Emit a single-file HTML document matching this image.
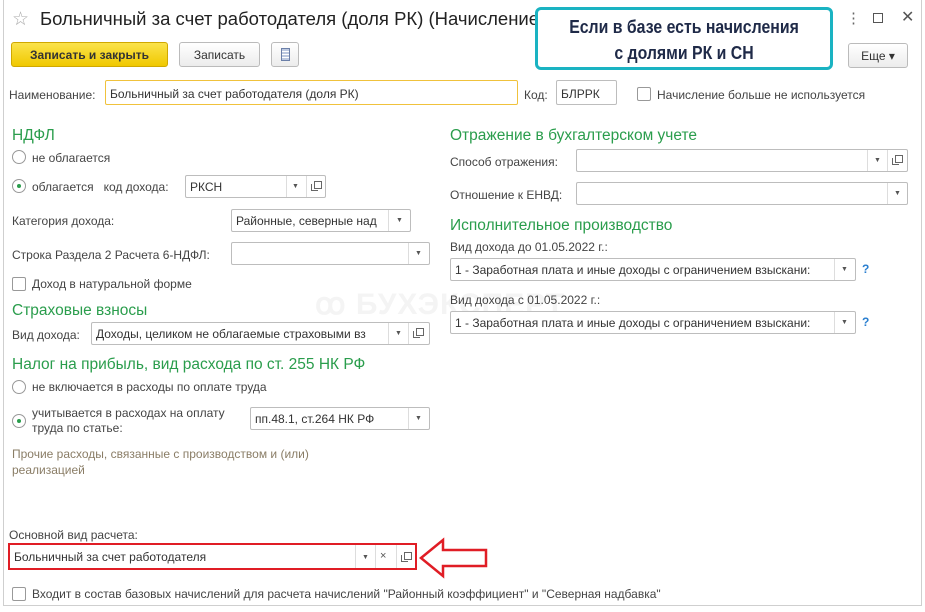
<!DOCTYPE html><html><head><meta charset="utf-8"><style>
*{box-sizing:border-box}
body{margin:0;width:925px;height:612px;background:#fff;font-family:"Liberation Sans",sans-serif;font-size:12px;color:#444;position:relative;overflow:hidden}
.a{position:absolute;white-space:nowrap}
.win{position:absolute;left:3px;top:-2px;width:919px;height:608px;border:1px solid #cfcfcf}
.h{position:absolute;color:#2a9d4c;font-size:15.5px;white-space:nowrap}
.in{position:absolute;height:23px;border:1px solid #bdbdbd;border-radius:2px;background:#fff;padding:4px 0 0 4px;overflow:hidden;white-space:nowrap;color:#333}
.sep{position:absolute;top:0;bottom:0;border-left:1px solid #ddd}
.dd{position:absolute;top:7px;font-size:7px;color:#555}
.op{position:absolute;top:5px;width:8px;height:8px;border:1px solid #666}
.op:after{content:"";position:absolute;left:-4px;top:2px;width:6px;height:6px;border-left:1px solid #666;border-bottom:1px solid #666}
.rb{position:absolute;width:14px;height:14px;border:1px solid #999;border-radius:50%;background:#fff}
.rb.on:after{content:"";position:absolute;left:4px;top:4px;width:4px;height:4px;border-radius:50%;background:#2a9d4c}
.cb{position:absolute;width:14px;height:14px;border:1px solid #999;border-radius:2px;background:#fff}
.btn{position:absolute;top:42px;height:25px;border:1px solid #bbb;border-radius:3px;background:linear-gradient(#fff,#ececec);font-size:12px;text-align:center;padding-top:5px;color:#333}
</style></head><body>
<div class="win"></div>
<div class="a" style="left:12px;top:8px;font-size:19px;color:#aaa">☆</div>
<div class="a" style="left:40px;top:8px;font-size:18.5px;color:#222">Больничный за счет работодателя (доля РК) (Начисление</div>
<div class="a" style="left:846px;top:9px;font-size:15px;color:#666">⋮</div>
<div class="a" style="left:873px;top:13px;width:10px;height:10px;border:1px solid #555"></div>
<div class="a" style="left:901px;top:7px;font-size:16px;color:#555">✕</div>
<div class="a" style="left:535px;top:7px;width:298px;height:63px;border:3px solid #1ab3c2;border-radius:6px;background:#fff;text-align:center;font-weight:bold;font-size:18px;color:#1f2a48;line-height:26px;padding-top:4px"><div style="transform:scaleX(0.88)">Если в базе есть начисления<br>с долями РК и СН</div></div>
<div class="btn" style="left:11px;width:157px;background:linear-gradient(#fbe34b,#f0c800);border-color:#d0a800;font-weight:bold;color:#333">Записать и закрыть</div>
<div class="btn" style="left:179px;width:81px">Записать</div>
<div class="btn" style="left:271px;width:28px"><div style="margin:0 auto;width:9px;height:13px;border:1px solid #6b7fa8;background:repeating-linear-gradient(#bcc8e0 0 2px,#fff 2px 3px)"></div></div>
<div class="btn" style="left:848px;width:60px;top:43px">Еще ▾</div>
<div class="a" style="left:9px;top:88px">Наименование:</div>
<div class="in" style="left:105px;top:80px;width:413px;height:25px;border-color:#f0c23c;padding-top:6px">Больничный за счет работодателя (доля РК)</div>
<div class="a" style="left:524px;top:88px">Код:</div>
<div class="in" style="left:556px;top:80px;width:61px;height:25px;padding-top:6px">БЛРРК</div>
<div class="cb" style="left:637px;top:87px"></div>
<div class="a" style="left:657px;top:88px">Начисление больше не используется</div>

<div class="a" style="left:315px;top:287px;font-size:30px;font-weight:bold;color:#f4f4f4;letter-spacing:1px">ꝏ БУХЭКСПЕРТ</div>

<div class="h" style="left:12px;top:127px">НДФЛ</div>
<div class="rb" style="left:12px;top:150px"></div><div class="a" style="left:32px;top:151px">не облагается</div>
<div class="rb on" style="left:12px;top:179px"></div><div class="a" style="left:32px;top:180px">облагается&nbsp;&nbsp; код дохода:</div>
<div class="in" style="left:185px;top:175px;width:141px">РКСН<div class="sep" style="left:100px"></div><div class="dd" style="left:106px">▼</div><div class="sep" style="left:120px"></div><div class="op" style="left:128px"></div></div>
<div class="a" style="left:12px;top:214px">Категория дохода:</div>
<div class="in" style="left:231px;top:209px;width:180px">Районные, северные над<div class="sep" style="left:156px"></div><div class="dd" style="left:164px">▼</div></div>
<div class="a" style="left:12px;top:248px">Строка Раздела 2 Расчета 6-НДФЛ:</div>
<div class="in" style="left:231px;top:242px;width:199px"><div class="sep" style="left:176px"></div><div class="dd" style="left:183px">▼</div></div>
<div class="cb" style="left:12px;top:277px"></div><div class="a" style="left:32px;top:277px">Доход в натуральной форме</div>
<div class="h" style="left:12px;top:302px">Страховые взносы</div>
<div class="a" style="left:12px;top:328px">Вид дохода:</div>
<div class="in" style="left:91px;top:322px;width:339px">Доходы, целиком не облагаемые страховыми вз<div class="sep" style="left:296px"></div><div class="dd" style="left:303px">▼</div><div class="sep" style="left:316px"></div><div class="op" style="left:324px"></div></div>
<div class="h" style="left:12px;top:356px">Налог на прибыль, вид расхода по ст. 255 НК РФ</div>
<div class="rb" style="left:12px;top:380px"></div><div class="a" style="left:32px;top:380px">не включается в расходы по оплате труда</div>
<div class="rb on" style="left:12px;top:414px"></div><div class="a" style="left:32px;top:406px;line-height:15px">учитывается в расходах на оплату<br>труда по статье:</div>
<div class="in" style="left:250px;top:407px;width:180px">пп.48.1, ст.264 НК РФ<div class="sep" style="left:157px"></div><div class="dd" style="left:164px">▼</div></div>
<div class="a" style="left:12px;top:446px;line-height:16px;color:#8a7d66">Прочие расходы, связанные с производством и (или)<br>реализацией</div>

<div class="h" style="left:450px;top:127px">Отражение в бухгалтерском учете</div>
<div class="a" style="left:450px;top:155px">Способ отражения:</div>
<div class="in" style="left:576px;top:149px;width:332px"><div class="sep" style="left:290px"></div><div class="dd" style="left:297px">▼</div><div class="sep" style="left:310px"></div><div class="op" style="left:318px"></div></div>
<div class="a" style="left:450px;top:188px">Отношение к ЕНВД:</div>
<div class="in" style="left:576px;top:182px;width:332px"><div class="sep" style="left:310px"></div><div class="dd" style="left:317px">▼</div></div>
<div class="h" style="left:450px;top:217px">Исполнительное производство</div>
<div class="a" style="left:450px;top:240px">Вид дохода до 01.05.2022 г.:</div>
<div class="in" style="left:450px;top:258px;width:406px">1 - Заработная плата и иные доходы с ограничением взыскани:<div class="sep" style="left:383px"></div><div class="dd" style="left:390px">▼</div></div>
<div class="a" style="left:862px;top:262px;color:#2a7fd0;font-weight:bold">?</div>
<div class="a" style="left:450px;top:293px">Вид дохода с 01.05.2022 г.:</div>
<div class="in" style="left:450px;top:311px;width:406px">1 - Заработная плата и иные доходы с ограничением взыскани:<div class="sep" style="left:383px"></div><div class="dd" style="left:390px">▼</div></div>
<div class="a" style="left:862px;top:315px;color:#2a7fd0;font-weight:bold">?</div>

<div class="a" style="left:9px;top:528px">Основной вид расчета:</div>
<div class="in" style="left:8px;top:543px;width:409px;height:27px;border:2px solid #e01d25;border-radius:0;padding-top:5px">Больничный за счет работодателя<div class="sep" style="left:345px"></div><div class="dd" style="left:352px;top:9px">▼</div><div class="sep" style="left:365px"></div><div class="a" style="left:370px;top:5px;font-size:11px;color:#555">×</div><div class="sep" style="left:386px"></div><div class="op" style="left:394px;top:7px"></div></div>
<svg class="a" style="left:418px;top:537px" width="72" height="42"><polygon points="3,21 25,3 25,13 68,13 68,29 25,29 25,39" fill="#fff" stroke="#e01d25" stroke-width="2.5"/></svg>
<div class="cb" style="left:12px;top:587px"></div><div class="a" style="left:32px;top:587px">Входит в состав базовых начислений для расчета начислений "Районный коэффициент" и "Северная надбавка"</div>
</body></html>
